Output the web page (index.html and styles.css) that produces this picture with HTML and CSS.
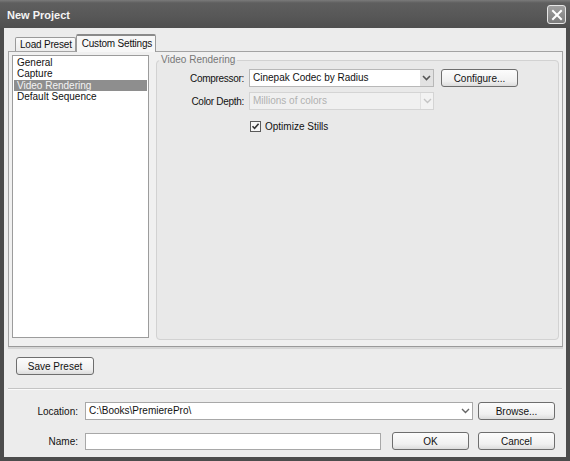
FILE: index.html
```html
<!DOCTYPE html>
<html lang="en">
<head>
  <meta charset="UTF-8">
  <title>New Project</title>
  <link rel="stylesheet" href="styles.css">
</head>
<body>

  <div class="window">
    <div class="titlebar">
      <span class="title">New Project</span>
      <button class="close-btn" aria-label="Close">
        <svg width="12" height="12" viewBox="0 0 12 12">
          <path d="M2 2 L10 10 M10 2 L2 10" stroke="#fff" stroke-width="2" stroke-linecap="square"/>
        </svg>
      </button>
    </div>

    <div class="client">
      <div class="tabs">
        <div class="tab">Load Preset</div>
        <div class="tab active">Custom Settings</div>
      </div>

      <div class="tab-panel">
        <ul class="listbox">
          <li>General</li>
          <li>Capture</li>
          <li class="selected">Video Rendering</li>
          <li>Default Sequence</li>
        </ul>

        <fieldset class="group">
          <legend>Video Rendering</legend>

          <div class="form-row">
            <label class="field-label">Compressor:</label>
            <div class="combo">
              <span class="combo-text">Cinepak Codec by Radius</span>
              <span class="combo-arrow">
                <svg width="9" height="6" viewBox="0 0 9 6"><path d="M1 1 L4.5 4.5 L8 1" fill="none" stroke="#555" stroke-width="1.6"/></svg>
              </span>
            </div>
            <button class="btn configure">Configure...</button>
          </div>

          <div class="form-row">
            <label class="field-label">Color Depth:</label>
            <div class="combo disabled">
              <span class="combo-text">Millions of colors</span>
              <span class="combo-arrow">
                <svg width="9" height="6" viewBox="0 0 9 6"><path d="M1 1 L4.5 4.5 L8 1" fill="none" stroke="#c4c4c4" stroke-width="1.4"/></svg>
              </span>
            </div>
          </div>

          <div class="check-row">
            <span class="checkbox">
              <svg width="9" height="9" viewBox="0 0 9 9"><path d="M1.5 4.2 L3.6 6.4 L7.6 1.8" fill="none" stroke="#333" stroke-width="1.6"/></svg>
            </span>
            <span>Optimize Stills</span>
          </div>
        </fieldset>
      </div>

      <div class="preset-row">
        <button class="btn">Save Preset</button>
      </div>

      <div class="separator"></div>

      <div class="bottom-row">
        <label class="bottom-label">Location:</label>
        <div class="combo location">
          <span class="combo-text">C:\Books\PremierePro\</span>
          <span class="combo-arrow">
            <svg width="9" height="6" viewBox="0 0 9 6"><path d="M1 1 L4.5 4.5 L8 1" fill="none" stroke="#666" stroke-width="1.4"/></svg>
          </span>
        </div>
        <button class="btn action">Browse...</button>
      </div>

      <div class="bottom-row">
        <label class="bottom-label">Name:</label>
        <input class="textbox" type="text">
        <button class="btn action ok">OK</button>
        <button class="btn action">Cancel</button>
      </div>
    </div>
  </div>

</body>
</html>
```

FILE: styles.css
```css
* {
  box-sizing: border-box;
}

body {
  margin: 0;
  background: #ececec;
  font-family: "Liberation Sans", Arial, sans-serif;
  font-size: 10px;
  color: #111;
}

.window {
  width: 570px;
  height: 461px;
  display: flex;
  flex-direction: column;
}

/* Title bar */
.titlebar {
  height: 28px;
  flex: none;
  display: flex;
  align-items: center;
  justify-content: space-between;
  padding: 0 4px 0 7px;
  background: linear-gradient(#7a7a7a 0, #5e5e5e 3px, #575757 60%, #4f4f4f 100%);
}

.title {
  color: #f4f4f4;
  font-weight: bold;
  font-size: 11px;
  margin-top: 1px;
}

.close-btn {
  width: 19px;
  height: 19px;
  padding: 0;
  border: 1px solid #e6e6e6;
  border-radius: 3px;
  background: linear-gradient(#a0a0a0, #7c7c7c);
  display: flex;
  align-items: center;
  justify-content: center;
  margin-top: 1px;
}

.client {
  flex: 1;
  border: 4px solid #4c4c4c;
  border-top: none;
  background: #ececec;
  display: flex;
  flex-direction: column;
}

/* Tabs */
.tabs {
  display: flex;
  align-items: flex-end;
  margin-top: 6px;
  padding-left: 11px;
  height: 17px;
  position: relative;
  z-index: 1;
  letter-spacing: -0.2px;
}

.tab {
  height: 14px;
  padding: 0 3px 0 4px;
  border: 1px solid #9a9a9a;
  border-bottom: none;
  border-radius: 2px 2px 0 0;
  background: linear-gradient(#fafafa, #ececec);
  line-height: 13px;
}

.tab.active {
  padding: 0 3px 0 5px;
  line-height: 15px;
  background: #f7f7f7;
  border-top: 2px solid #8a8a8a;
  margin-bottom: -1px;
  height: 18px;
}

.tab-panel {
  margin: 0 3px 0 4px;
  height: 296px;
  border: 1px solid #a3a3a3;
  border-bottom-color: #9a9a9a;
  background: #f0f0f0;
  display: flex;
  padding: 3px 3px 8px 3px;
  box-shadow: 0 2px 0 #d6d6d6;
}

.listbox {
  list-style: none;
  margin: 0;
  padding: 1px 1px;
  width: 137px;
  background: #fff;
  border: 1px solid #9c9c9c;
  height: 283px;
}

.listbox li {
  height: 11.4px;
  line-height: 11px;
  padding-left: 3px;
}

.listbox li.selected {
  background: #8e8e8e;
  color: #f4f4f4;
}

/* Video Rendering group */
.group {
  margin: -1px 0 0 7px;
  flex: 1;
  border: 1px solid #d2d2d2;
  border-radius: 4px;
  background: #e9e9e9;
  padding: 0;
  height: 286px;
}

.group legend {
  margin-left: 2px;
  padding: 0 2px;
  color: #777;
  line-height: 12px;
}

.form-row {
  display: flex;
  align-items: center;
  height: 18px;
  margin-top: 5px;
}

.form-row:first-of-type {
  margin-top: 3px;
}

.field-label {
  width: 89px;
  text-align: right;
  padding-right: 2px;
  letter-spacing: -0.3px;
}

.combo {
  width: 185px;
  height: 18px;
  margin-left: 3px;
  display: flex;
  align-items: stretch;
  background: #fff;
  border: 1px solid #b8b8b8;
}

.combo-text {
  flex: 1;
  padding-left: 3px;
  line-height: 16px;
}

.combo-arrow {
  width: 13px;
  background: #e2e2e2;
  display: flex;
  align-items: center;
  justify-content: center;
}

.combo.disabled {
  background: #f0f0f0;
  border-color: #d4d4d4;
  color: #b0b0b0;
}

.combo.disabled .combo-arrow {
  background: #f2f2f2;
  border-left: 1px solid #e0e0e0;
}

.btn {
  height: 18px;
  padding: 0;
  border: 1px solid #6e6e6e;
  border-radius: 3px;
  background: linear-gradient(#fcfcfc, #f0f0f0 70%, #dcdcdc);
  font-family: inherit;
  font-size: 10px;
  color: #111;
  cursor: pointer;
}

.configure {
  width: 77px;
  margin-left: 7px;
}

.check-row {
  display: flex;
  align-items: center;
  margin: 10px 0 0 93px;
  height: 12px;
}

.checkbox {
  width: 11px;
  height: 11px;
  border: 1px solid #5a5a5a;
  background: #f6f6f6;
  display: flex;
  align-items: center;
  justify-content: center;
  margin-right: 4px;
}

/* Bottom area */
.preset-row {
  padding: 10px 0 0 12px;
}

.preset-row .btn {
  width: 78px;
}

.separator {
  margin: 13px 4px 0 4px;
  border-top: 1px solid #c4c4c4;
  border-bottom: 1px solid #fafafa;
}

.bottom-row {
  display: flex;
  align-items: center;
  height: 18px;
  margin-top: 12px;
}

.bottom-label {
  width: 74px;
  text-align: right;
}

.combo.location {
  width: 388px;
  margin-left: 7px;
  border-color: #a8a8a8;
}

.combo.location .combo-arrow {
  background: #fff;
}

.textbox {
  width: 296px;
  height: 17px;
  margin: 0 0 0 7px;
  border: 1px solid #a8a8a8;
  background: #fff;
}

.action {
  width: 77px;
  margin-left: 5px;
}

.ok {
  margin-left: 11px;
  margin-right: 4px;
}
```
